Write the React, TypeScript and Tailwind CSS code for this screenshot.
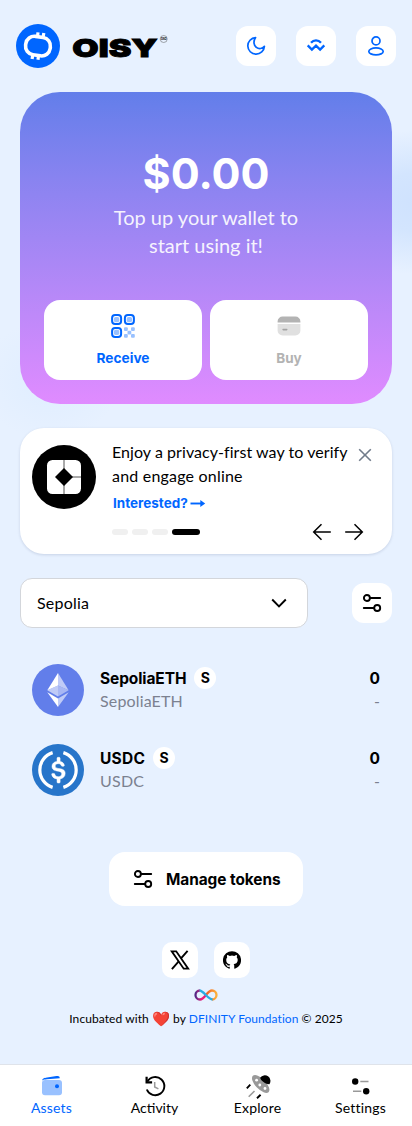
import React from 'react'

function Logo() {
  return (
    <div className="flex items-center gap-3">
      <svg width="44" height="44" viewBox="0 0 44 44" fill="none">
        <circle cx="22" cy="22" r="22" fill="#0066ff" />
        <rect x="9.600" y="12.800" width="24.800" height="18.600" rx="8.600" transform="rotate(8 22 22)" stroke="#fff" strokeWidth="3.600" />
        <path d="M21.600 12l.4-3.600M27.200 12.800l.6-3.700M16.700 31.200l-.6 3.700M22.400 32.200l-.4 3.600" stroke="#fff" strokeWidth="3.200" />
      </svg>
      <svg width="97" height="36" viewBox="0 0 97 36">
        <text x="0.300" y="28.900" textLength="85.500" lengthAdjust="spacingAndGlyphs" fontFamily="Inter, sans-serif" fontWeight="900" fontSize="25" stroke="#000" strokeWidth="0.900">OISY</text>
        <circle cx="91.700" cy="11" r="3.500" fill="none" stroke="#555" strokeWidth="0.500" />
        <text x="88.900" y="12.100" textLength="5.600" lengthAdjust="spacingAndGlyphs" fontFamily="Inter, sans-serif" fontWeight="700" fontSize="3">DAO</text>
      </svg>
    </div>
  )
}

function HeaderButton({ children }: { children: React.ReactNode }) {
  return (
    <button className="flex size-10 items-center justify-center rounded-xl bg-white text-[#0066ff]">
      <svg width="20" height="20" viewBox="0 0 20 20" fill="none" stroke="currentColor" strokeWidth="1.700" strokeLinecap="round" strokeLinejoin="round">
        {children}
      </svg>
    </button>
  )
}

function QrIcon() {
  return (
    <svg width="24" height="24" viewBox="0 0 24 24" fill="none">
      {[[5.600, 5.600], [18.400, 5.600], [5.600, 18.400]].map(([x, y]) => (
        <g key={`${x}-${y}`}>
          <rect x={x - 4.500} y={y - 4.500} width="9" height="9" rx="3" stroke="#0066ff" strokeWidth="2" />
          <rect x={x - 2.700} y={y - 2.700} width="5.400" height="5.400" rx="1.800" fill="#99c1ff" />
        </g>
      ))}
      <g fill="#99c1ff">
        <rect x="13" y="13.200" width="3.800" height="3.800" rx="1" />
        <rect x="20" y="13.200" width="3.800" height="3.800" rx="1" />
        <rect x="16.500" y="16.700" width="3.800" height="3.800" rx="1" />
        <rect x="13" y="20" width="3.800" height="3.800" rx="1" />
        <rect x="20" y="20" width="3.800" height="3.800" rx="1" />
      </g>
    </svg>
  )
}

function CardIcon() {
  return (
    <svg width="24" height="24" viewBox="0 0 24 24">
      <path d="M.6 8.600V7.500a5 5 0 0 1 5-5h12.800a5 5 0 0 1 5 5v1.100z" fill="#b3b3b3" />
      <path d="M.6 10h22.800v6.500a5 5 0 0 1-5 5H5.600a5 5 0 0 1-5-5z" fill="#e0e0e0" />
      <rect x="5.300" y="14.700" width="5.200" height="1.700" rx=".8" fill="#a3a3a3" />
    </svg>
  )
}

function SlidersIcon() {
  return (
    <svg width="20" height="20" viewBox="0 0 20 20" fill="none" stroke="#000" strokeWidth="1.900" strokeLinecap="round">
      <circle cx="4.900" cy="5" r="3" />
      <path d="M8 5h10.200M1.800 15h10.200" />
      <circle cx="15.200" cy="15" r="3" />
    </svg>
  )
}

function EthIcon() {
  return (
    <svg width="52" height="52" viewBox="0 0 52 52">
      <circle cx="26" cy="26" r="26" fill="#627eea" />
      <path d="M26 9v12.600l10.600 4.700z" fill="#fff" fillOpacity=".6" />
      <path d="M26 9L15.300 26.300 26 21.600z" fill="#fff" />
      <path d="M26 21.600v10.900l10.600-6.200z" fill="#c0cbf7" fillOpacity=".75" />
      <path d="M15.300 26.300L26 32.500V21.600z" fill="#fff" fillOpacity=".6" />
      <path d="M26 34.500v8.600l10.700-14.800z" fill="#fff" fillOpacity=".6" />
      <path d="M26 43.100v-8.600l-10.700-6.200z" fill="#fff" />
    </svg>
  )
}

function UsdcIcon() {
  return (
    <svg width="52" height="52" viewBox="0 0 32 32">
      <circle cx="16" cy="16" r="16" fill="#2775ca" />
      <path fill="#fff" stroke="#fff" strokeWidth=".3" d="M20.400 18.200c0-2.100-1.300-2.800-3.900-3.100-1.900-.3-2.200-.7-2.200-1.600s.6-1.400 1.800-1.400c1.100 0 1.700.4 2 1.300.1.200.2.300.4.300h.9c.3 0 .5-.2.500-.5v-.1c-.2-1.300-1.300-2.200-2.600-2.300V8.700c0-.2-.2-.4-.5-.5h-.9c-.3 0-.4.200-.5.500v2c-1.900.2-3.100 1.500-3.100 3 0 2 1.200 2.700 3.800 3 1.700.3 2.200.7 2.200 1.700s-.9 1.700-2 1.700c-1.600 0-2.200-.7-2.300-1.600-.1-.2-.2-.4-.4-.4h-1c-.3 0-.5.2-.5.500.2 1.600 1.200 2.600 3.300 2.900v2c0 .2.200.4.500.5h.9c.3 0 .4-.2.500-.5v-2c1.900-.3 3.100-1.600 3.100-3.300z" />
      <path d="M12.700 5.300a11.200 11.200 0 0 0 0 21.400M19.300 5.300a11.200 11.200 0 0 1 0 21.400" fill="none" stroke="#fff" strokeWidth="2" />
    </svg>
  )
}

function TokenRow({ symbol, name, icon, symbolClass, nameClass }: { symbol: string; name: string; icon: React.ReactNode; symbolClass: string; nameClass: string }) {
  return (
    <div className="flex h-20 items-center gap-4 px-3">
      {icon}
      <div className="flex-1 pb-0.5">
        <div className="flex h-6 items-center gap-2">
          <span className={`pt-0.5 font-[Inter] text-[15.500px] font-bold leading-6 ${symbolClass}`}>{symbol}</span>
          <span className="flex size-[22px] items-center justify-center rounded-full bg-white font-[Inter] text-[14px] font-bold leading-[22px]">S</span>
        </div>
        <div className={`text-base leading-[22px] text-[#7b8190] ${nameClass}`}>{name}</div>
      </div>
      <div className="pb-0.5 text-right">
        <div className="flex h-6 items-center justify-end pt-0.5 font-[Inter] text-[15.500px] font-bold leading-6">0</div>
        <div className="text-base leading-[22px] text-[#7b8190]">-</div>
      </div>
    </div>
  )
}

function NavItem({ label, icon, className }: { label: string; icon: React.ReactNode; className: string }) {
  return (
    <a className={`flex flex-1 flex-col items-center pt-2 text-sm leading-5 ${className}`}>
      <span className="flex h-[25px] items-center">{icon}</span>
      <span>{label}</span>
    </a>
  )
}

export default function App() {
  return (
    <div
      className="flex h-[1126px] w-full flex-col bg-[#e7f1ff] text-black"
      style={{
        fontFamily: 'Lato, sans-serif',
        backgroundImage:
          'radial-gradient(ellipse 110px 72px at 418px 202px, #cfe2fe 0%, #d3e5fe 40%, rgba(231,241,255,0) 100%), radial-gradient(ellipse 70px 60px at 50px 380px, #dfedff 0%, rgba(231,241,255,0) 100%)',
      }}
    >
      <header className="flex h-[92px] items-center justify-between px-4">
        <Logo />
        <div className="flex gap-5">
          <HeaderButton>
            <path d="M9.600 1.600A8.300 8.300 0 1 0 18.400 10.400c-2 2.300-5.500 2.900-8 1-2.800-2.100-3.300-6.200-.8-9.800z" />
          </HeaderButton>
          <HeaderButton>
            <path d="M5 6.700c2.700-3.100 7.300-3.100 10 0" strokeWidth="2.300" strokeLinecap="butt" />
            <path d="M1.700 9.400L5.900 13.600 10 9.700l4.100 3.900 4.200-4.200" strokeWidth="2.300" strokeLinecap="butt" strokeLinejoin="miter" />
          </HeaderButton>
          <HeaderButton>
            <circle cx="10" cy="4.900" r="4" />
            <ellipse cx="10" cy="15.400" rx="7.200" ry="3.500" />
          </HeaderButton>
        </div>
      </header>

      <main className="flex flex-col px-5">
        <section className="flex h-[312px] flex-col justify-between rounded-[40px] bg-linear-to-b from-[#627eea] to-[#e08bff] p-6 text-center text-white">
          <div className="pt-[33px]">
            <div className="font-[Inter] text-[43px] font-bold leading-[48px]">$0.00</div>
            <div className="mt-1.5 text-xl leading-7 opacity-90">Top up your wallet to<br />start using it!</div>
          </div>
          <div className="flex gap-2">
            <button className="flex h-20 flex-1 flex-col items-center gap-2.5 rounded-2xl bg-white pt-3.5 font-[Inter] text-[13.700px] font-bold leading-5 text-[#0066ff]">
              <QrIcon />Receive
            </button>
            <button className="flex h-20 flex-1 flex-col items-center gap-2.5 rounded-2xl bg-white pt-3.5 font-[Inter] text-[13.500px] font-bold leading-5 text-[#b3b3b3]">
              <CardIcon />Buy
            </button>
          </div>
        </section>

        <section className="mt-6 flex h-[126px] gap-4 rounded-3xl bg-white pl-3 pr-5 shadow-[0_1px_3px_rgba(0,30,80,0.14)]">
          <svg className="mt-[17px] shrink-0" width="64" height="64" viewBox="0 0 64 64">
            <circle cx="32" cy="32" r="32" fill="#000" />
            <rect x="15" y="15" width="34" height="34" rx="5.500" fill="#fff" />
            <path d="M32 15v34M32 32h17" stroke="#555" strokeWidth="1" />
            <path d="M32 23l9 9-9 9-9-9z" fill="#000" />
          </svg>
          <div className="flex flex-1 flex-col pt-3">
            <div className="flex items-start justify-between">
              <p className="whitespace-nowrap text-base leading-6 tracking-[0.060px]">Enjoy a privacy-first way to verify<br /><span className="tracking-[0.200px]">and engage online</span></p>
              <svg className="mt-2" width="14" height="14" viewBox="0 0 14 14" stroke="#707b8a" strokeWidth="1.600"><path d="M1.200 1.200l11.600 11.600M12.800 1.200L1.200 12.800" /></svg>
            </div>
            <a className="mt-[5px] flex items-center gap-0.5 pl-px font-[Inter] text-[13.500px] font-bold leading-5 text-[#0066ff]">
              Interested?
              <svg width="16" height="10" viewBox="0 0 16 10"><path d="M0.500 5.500h12" stroke="#0066ff" strokeWidth="1.900" /><path d="M10.300 1.900l4.900 3.600-4.900 3.600z" fill="#0066ff" /></svg>
            </a>
            <div className="mt-[9px] flex items-center justify-between pr-2">
              <div className="flex gap-1">
                <span className="h-1.5 w-4 rounded-full bg-[#f0f0f0]" />
                <span className="h-1.5 w-4 rounded-full bg-[#f0f0f0]" />
                <span className="h-1.5 w-4 rounded-full bg-[#f0f0f0]" />
                <span className="h-1.5 w-7 rounded-full bg-black" />
              </div>
              <div className="flex gap-3">
                <svg width="20" height="20" viewBox="0 0 20 20" fill="none" stroke="#000" strokeWidth="1.500"><path d="M18.800 10H2M9.500 2.200L1.700 10l7.800 7.800" /></svg>
                <svg width="20" height="20" viewBox="0 0 20 20" fill="none" stroke="#000" strokeWidth="1.500"><path d="M1.200 10H18M10.500 2.200l7.800 7.800-7.800 7.800" /></svg>
              </div>
            </div>
          </div>
        </section>

        <div className="mt-6 flex items-center justify-between">
          <div className="flex h-[50px] w-[288px] items-center justify-between rounded-xl border border-[#d3d6db] bg-white px-4">
            <span className="text-base leading-6 tracking-[0.200px]">Sepolia</span>
            <svg className="mr-1" width="16" height="16" viewBox="0 0 16 16" fill="none" stroke="#000" strokeWidth="1.900"><path d="M1.200 4.500L8 11.300l6.800-6.800" /></svg>
          </div>
          <button className="flex size-10 items-center justify-center rounded-xl bg-white"><SlidersIcon /></button>
        </div>

        <div className="mt-[22px]">
          <TokenRow symbol="SepoliaETH" name="SepoliaETH" icon={<EthIcon />} symbolClass="tracking-[-0.100px]" nameClass="tracking-[0.150px]" />
          <TokenRow symbol="USDC" name="USDC" icon={<UsdcIcon />} symbolClass="tracking-[0.250px]" nameClass="tracking-[0.250px]" />
        </div>

        <button className="mt-[42px] flex h-[54px] w-[194px] items-center gap-3 self-center rounded-2xl bg-white pl-6 font-[Inter] text-[15.400px] font-bold">
          <SlidersIcon /><span className="pl-px pt-0.5 tracking-[-0.050px]">Manage tokens</span>
        </button>
      </main>

      <footer className="mt-9 flex flex-col items-center">
        <div className="flex gap-4">
          <a className="flex size-9 items-center justify-center rounded-[10px] bg-white">
            <svg width="20" height="20" viewBox="0 0 20 20" fill="none" stroke="#000"><path d="M1.700 1.300h4.500l12 17.400h-4.500z" strokeWidth="1.800" /><path d="M17.600.8L11 8.400M8.700 11.400L1.900 19.200" strokeWidth="1.900" /></svg>
          </a>
          <a className="flex size-9 items-center justify-center rounded-[10px] bg-white">
            <svg width="18" height="18" viewBox="0 0 24 24"><path d="M12 .3a12 12 0 0 0-3.800 23.400c.6.1.8-.3.8-.6v-2c-3.300.7-4-1.600-4-1.600-.6-1.400-1.400-1.800-1.400-1.800-1-.7.1-.7.1-.7 1.200 0 1.900 1.200 1.900 1.200 1 1.800 2.800 1.300 3.500 1 0-.8.4-1.300.7-1.600-2.700-.3-5.500-1.300-5.500-6 0-1.200.5-2.300 1.300-3.100-.2-.4-.6-1.600 0-3.200 0 0 1-.3 3.400 1.200a11.500 11.500 0 0 1 6 0c2.300-1.500 3.300-1.200 3.300-1.200.6 1.600.2 2.800 0 3.200.9.800 1.300 1.900 1.300 3.200 0 4.600-2.800 5.600-5.500 5.900.5.400.9 1 .9 2.200v3.300c0 .3.100.7.800.6A12 12 0 0 0 12 .3" /></svg>
          </a>
        </div>
        <svg className="mt-[11px]" width="24" height="12" viewBox="0 0 24 12" fill="none" strokeWidth="2.300">
          <defs>
            <linearGradient id="warm" x1="0" x2="1"><stop offset="0" stopColor="#f15a24" /><stop offset="1" stopColor="#fbb03b" /></linearGradient>
            <linearGradient id="cool" x1="0" x2="1"><stop offset="0" stopColor="#522785" /><stop offset="0.600" stopColor="#ed1e79" /></linearGradient>
          </defs>
          <path d="M12 6c2-2.500 4-4.500 6-4.500a4.500 4.500 0 0 1 0 9" stroke="url(#warm)" />
          <path d="M12 6c-2 2.500-4 4.500-6 4.500a4.500 4.500 0 0 1 0-9" stroke="url(#cool)" />
          <path d="M5.500 1.500C9.500 1.500 14 10.500 18.500 10.500" stroke="#29abe2" />
        </svg>
        <p className="mt-2 flex h-5 items-center whitespace-pre text-xs leading-5">
          <span className="tracking-[0.080px]">Incubated with </span><span className="text-[14.500px]">❤️</span><span className="tracking-[0.050px]"> by <a className="text-[#0066ff]">DFINITY Foundation</a> © 2025</span>
        </p>
      </footer>

      <nav className="mt-auto flex h-[62px] border-t border-[#dfe3ea] bg-white">
        <NavItem label="Assets" className="tracking-[0.200px] text-[#0066ff]" icon={
          <svg width="24" height="24" viewBox="0 0 24 24"><rect x="2" y="6" width="20" height="15.200" rx="3" fill="#99c1ff" /><path d="M2 6.600C3 4 4 4.200 7 3.500l9.500-1.400C19 1.700 19.600 2.500 19.800 4.200L7 5.200C5 5.400 3 5.500 2 6.600z" fill="#0066ff" /><circle cx="17" cy="12.200" r="2" fill="#0066ff" /></svg>
        } />
        <NavItem label="Activity" className="" icon={
          <svg className="ml-px" width="24" height="24" viewBox="0 0 24 24" fill="none" stroke="#000" strokeWidth="1.900"><path d="M4.400 7.500A9.100 9.100 0 1 1 3.800 15.500" /><path d="M3.600 2.800v5.500h5.500" strokeWidth="2.200" /><path d="M11.700 8v5l3.700 1.800" stroke="#999" strokeWidth="1.500" /></svg>
        } />
        <NavItem label="Explore" className="tracking-[0.150px]" icon={
          <svg width="26" height="26" viewBox="0 0 26 26" fill="none">
            <ellipse cx="15.700" cy="11" rx="11.300" ry="5.200" transform="rotate(46 15.700 11)" fill="#999" />
            <path d="M15.200 4.700a5.600 5.600 0 0 1 9.200 6.500c-3 .3-9-3.500-9.200-6.500z" fill="#000" />
            <g fill="#fff"><circle cx="11.600" cy="7.200" r="1.400" /><circle cx="14.800" cy="12" r="1.400" /><circle cx="20" cy="15.500" r="1.400" /></g>
            <path d="M5.300 11.700l-3.500 3.600M15.600 21.700L12 25.200" stroke="#000" strokeWidth="1.900" /><path d="M9.500 18L3.700 23.800" stroke="#999" strokeWidth="1.600" />
          </svg>
        } />
        <NavItem label="Settings" className="tracking-[0.200px]" icon={
          <svg width="24" height="24" viewBox="0 0 24 24"><circle cx="6.200" cy="7.500" r="3.200" /><circle cx="17.200" cy="17.300" r="3.200" /><path d="M11.300 7.500h8.200M4 17.300h8.300" stroke="#999" strokeWidth="1.500" /></svg>
        } />
      </nav>
    </div>
  )
}
